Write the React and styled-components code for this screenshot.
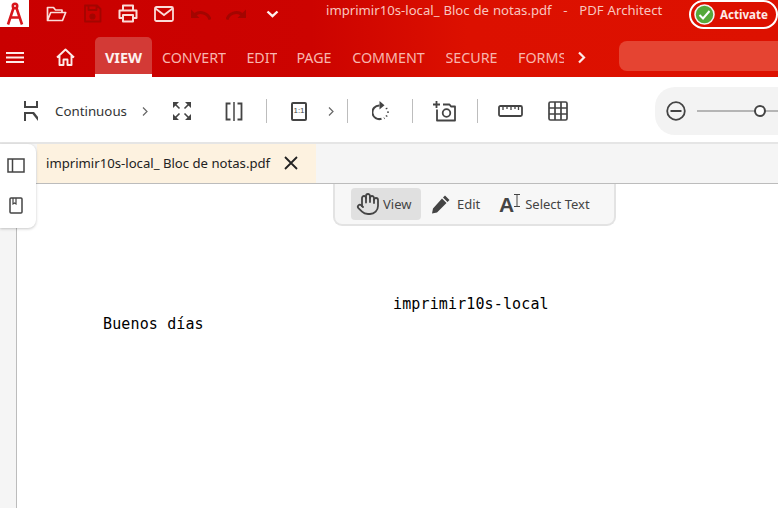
import React from "react";
import styled, { createGlobalStyle } from "styled-components";
import { Hand } from "lucide-react";

const Global = createGlobalStyle`
  html, body { margin: 0; padding: 0; background: #fff; }
  * { box-sizing: border-box; }
`;
const UI = `"Noto Sans", "Open Sans", sans-serif`;

const Page = styled.div`
  position: relative; width: 778px; height: 508px; overflow: hidden;
  display: flex; flex-direction: column; font-family: ${UI}; background: #fff;
`;
const Header = styled.header`
  height: 77px; flex: none; display: flex; flex-direction: column;
  background: linear-gradient(90deg, #c90000 0%, #cc0300 40%, #dc1000 60%, #dd1100 100%);
`;
const TitleBar = styled.div`height: 37px; flex: none; display: flex; align-items: flex-start;`;
const Logo = styled.div`width: 29px; height: 27px; background: #fff; flex: none; display: flex; justify-content: center; align-items: center;`;
const QuickIcon = styled.div`
  width: 36px; height: 27px; flex: none; display: flex; align-items: center; justify-content: center;
  color: ${p => p.$off ? "#a30500" : p.$bright ? "#fdf0ee" : "#fbdcd8"};
`;
const QuickGroup = styled.div`display: flex; margin-left: 9px;`;
const Title = styled.div`
  margin-left: 36px; width: 363px; flex: none; font-size: 13.15px; line-height: 20px; color: #f9c5bf; white-space: pre; word-spacing: .5px;
`;
const Activate = styled.div`
  width: 89px; height: 29px; border: 2px solid #fff; border-radius: 15px; flex: none;
  display: flex; align-items: center; gap: 5px; padding-left: 3px; color: #fdeae8; font-size: 11.6px; font-weight: 700;
`;
const NavBar = styled.nav`height: 40px; flex: none; display: flex; align-items: stretch; color: #f8b6ae;`;
const Burger = styled.div`width: 56px; padding-left: 6px; flex: none; display: flex; align-items: center;`;
const HomeBox = styled.div`width: 39px; flex: none; display: flex; align-items: center; color: #fdeae8;`;
const NavItem = styled.div`
  flex: none; width: ${p => p.$w}px; margin-left: ${p => p.$ml || 0}px; display: flex; align-items: center; justify-content: ${p => p.$clip ? "flex-start" : "center"};
  font-size: 14.3px; white-space: nowrap; overflow: hidden; padding-top: 1px;
`;
const ActiveTab = styled.div`
  width: 57px; flex: none; display: flex; align-items: center; justify-content: center; color: #fdf0ee;
  font-size: 14.5px; font-weight: 700; background: #d33a36; border-radius: 5px 5px 0 0; border-bottom: 3px solid #fff; padding-top: 3px;
`;
const NavArrow = styled.div`margin-left: 13px; width: 10px; flex: none; display: flex; align-items: center; color: #fdeae8;`;
const Search = styled.div`margin: 4px 0 6px 32px; flex: 1; background: #e54432; border-radius: 8px 0 0 8px;`;

const Toolbar = styled.div`
  height: 65px; flex: none; display: flex; align-items: center; background: #fff; color: #444; padding-top: 3px;
`;
const Tool = styled.div`
  margin-left: ${p => p.$ml}px; flex: none; display: flex; align-items: center; color: ${p => p.$soft ? "#666" : "#444"}; height: 24px;
`;
const ToolLabel = styled.span`margin-left: ${p => p.$ml}px; width: 72px; font-size: 13.3px; color: #333; flex: none; white-space: nowrap;`;
const Sep = styled.div`margin-left: ${p => p.$ml}px; width: 1px; height: 24px; background: #bdbdbd; flex: none;`;
const RatioIcon = styled.div`
  width: 16px; height: 19px; border: 2px solid #444; border-radius: 2px; font-size: 8px; line-height: 1; color: #444;
  display: flex; align-items: center; justify-content: center; font-family: "Liberation Sans", sans-serif;
`;
const ZoomPill = styled.div`
  margin-left: 87px; flex: 1; height: 48px; background: #f3f3f3; border-radius: 20px 0 0 20px;
  display: flex; align-items: center; padding-left: 11px;
`;
const Track = styled.div`
  position: relative; margin-left: 11px; flex: 1; height: 2px; background: #b5b5b5;
`;
const Knob = styled.div`
  position: absolute; left: 57px; top: -5px; width: 12px; height: 12px; border-radius: 50%; background: #fff; border: 2px solid #444;
`;
const TabStrip = styled.div`
  height: 42px; flex: none; background: #f5f5f5; border-top: 2px solid #e5e5e5; border-bottom: 1px solid #bcbcbc;
  display: flex; padding-left: 37px;
`;
const DocTab = styled.div`
  width: 279px; background: #fdf2e0; display: flex; align-items: center; padding: 0 0 2px 9px; font-size: 13.15px; color: #222;
  flex: none; white-space: nowrap;
`;
const CloseBox = styled.div`margin-left: 13px; display: flex; color: #222;`;
const Workspace = styled.div`flex: 1; display: flex; min-height: 0;`;
const Gutter = styled.div`width: 17px; flex: none; background: #f5f5f5; border-right: 1px solid #bcbcbc;`;
const Sheet = styled.main`
  flex: 1; background: #fff; padding-top: 110px; font-family: "DejaVu Sans Mono", monospace; font-size: 15px;
  letter-spacing: .13px; line-height: 20px; color: #000;
`;
const TextLine = styled.div`padding-left: ${p => p.$x}px; white-space: pre;`;
const SidePanel = styled.aside`
  position: absolute; left: 0; top: 144px; width: 36px; height: 84px; background: #fff;
  border-radius: 0 8px 8px 0; box-shadow: 0 1px 3px rgba(0,0,0,.22);
  display: flex; flex-direction: column; align-items: flex-start; color: #444;
`;
const SideBtn = styled.div`height: ${p => p.$h}px; display: flex; align-items: center; justify-content: center; width: 32px; padding-top: ${p => p.$pt || 0}px;`;
const ModeBar = styled.div`
  position: absolute; left: 333px; top: 184px; width: 283px; height: 42px; background: #f7f7f7;
  border: 2px solid #e3e3e3; border-top: 0; border-radius: 0 0 9px 9px; display: flex; align-items: center; padding-left: 16px; color: #444;
`;
const Mode = styled.div`
  flex: none; height: 32px; display: flex; align-items: center; border-radius: 4px; font-size: 13px; color: #444;
  width: ${p => p.$w}px; padding-left: ${p => p.$pl}px; gap: ${p => p.$gap}px;
  background: ${p => p.$on ? "#e0e0e0" : "transparent"};
`;
const BigA = styled.span`font-family: "Liberation Sans", sans-serif; font-weight: 700; font-size: 21px; line-height: 1; color: #444;`;

const S = ({ w, h, children, sw = 2 }) => (
  <svg width={w} height={h} viewBox={`0 0 ${w} ${h}`} fill="none" stroke="currentColor" strokeWidth={sw}>{children}</svg>
);

const App = () => (
  <Page>
    <Global />
    <Header>
      <TitleBar>
        <Logo>
          <svg width="22" height="25" viewBox="0 0 22 25" fill="none" stroke="#d9161c" strokeWidth="2.6">
            <circle cx="11" cy="5" r="2.2" />
            <path d="M9.500 7 L4 23.500 M12.500 7 L18 23.500 M5.500 16.500 H16.500" />
          </svg>
        </Logo>
        <QuickGroup>
          <QuickIcon>
            <S w={21} h={17} sw={1.7}><path d="M1.5 15.5V2.5h6l2 2.5h6.5v2.5M1.5 15.5l3.2-8h15l-3.2 8z" strokeLinejoin="round" /></S>
          </QuickIcon>
          <QuickIcon $off>
            <S w={19} h={19} sw={1.8}><path d="M2 1.5h12l3.5 3.5v12.5H2zM5.5 1.5v4.5h8V1.5" strokeLinejoin="round" /><circle cx="9.5" cy="12.5" r="2.2" fill="currentColor" /></S>
          </QuickIcon>
          <QuickIcon>
            <S w={20} h={19} sw={2}><path d="M5 6V1.5h10V6M5 14H1.5V6.5h17V14H15M5 11h10v6.500H5z" strokeLinejoin="round" /></S>
          </QuickIcon>
          <QuickIcon>
            <S w={20} h={16} sw={1.8}><rect x="1" y="1" width="18" height="14" rx="1.5" /><path d="M1.5 2.5L10 9l8.5-6.500" /></S>
          </QuickIcon>
          <QuickIcon $off>
            <S w={21} h={12} sw={3}><path d="M20 11.500C18 5 10 2.500 5 6.500" /><path d="M1 1.500v8.500h8.500z" fill="currentColor" stroke="none" /></S>
          </QuickIcon>
          <QuickIcon $off>
            <S w={21} h={12} sw={3}><path d="M1 11.500C3 5 11 2.500 16 6.500" /><path d="M20 1.500v8.500h-8.500z" fill="currentColor" stroke="none" /></S>
          </QuickIcon>
          <QuickIcon $bright>
            <S w={13} h={8} sw={2.4}><path d="M1.500 1.500L6.500 6.200l5-4.700" /></S>
          </QuickIcon>
        </QuickGroup>
        <Title>{"imprimir10s-local_ Bloc de notas.pdf   -   PDF Architect"}</Title>
        <Activate>
          <svg width="21" height="21" viewBox="0 0 21 21">
            <circle cx="10.500" cy="10.500" r="9.500" fill="#55a93a" stroke="#f4f4f4" strokeWidth="1.600" />
            <path d="M5.500 11l3.500 3.500 6.500-7.500" fill="none" stroke="#fff" strokeWidth="2" />
          </svg>
          Activate
        </Activate>
      </TitleBar>
      <NavBar>
        <Burger>
          <S w={18} h={13} sw={2}><path d="M0 2h18M0 6.500h18M0 11h18" stroke="#fdeae8" /></S>
        </Burger>
        <HomeBox>
          <S w={19} h={18} sw={1.900}><path d="M1 9.500L9.500 1.500 18 9.500M3.500 8v9h4v-5.500h4V17h4V8" strokeLinejoin="round" /></S>
        </HomeBox>
        <ActiveTab>VIEW</ActiveTab>
        <NavItem $ml={10} $w={64}>CONVERT</NavItem>
        <NavItem $ml={21} $w={30}>EDIT</NavItem>
        <NavItem $ml={20} $w={34}>PAGE</NavItem>
        <NavItem $ml={21} $w={73}>COMMENT</NavItem>
        <NavItem $ml={21} $w={51}>SECURE</NavItem>
        <NavItem $ml={21} $w={46} $clip>FORMS</NavItem>
        <NavArrow>
          <S w={9} h={13} sw={2.200}><path d="M2 1.500L7 6.500l-5 5" /></S>
        </NavArrow>
        <Search />
      </NavBar>
    </Header>

    <Toolbar>
      <Tool $ml={24}>
        <svg width="14" height="20" viewBox="0 0 14 20" fill="none" stroke="currentColor" strokeWidth="2">
          <path d="M1 0v6h12V0M1 20v-8h8" />
          <path d="M7 11h3l4 5v4z" fill="currentColor" stroke="none" />
        </svg>
      </Tool>
      <ToolLabel $ml={17}>Continuous</ToolLabel>
      <Tool $ml={15} $soft>
        <S w={6} h={9} sw={1.200}><path d="M1 .5l4 4-4 4" /></S>
      </Tool>
      <Tool $ml={25}>
        <svg width="18" height="18" viewBox="0 0 18 18" fill="currentColor" stroke="currentColor" strokeWidth="1.600">
          <path d="M0 6V0h6zM18 6V0h-6zM0 12v6h6zM18 12v6h-6z" stroke="none" />
          <path d="M2 2l4.500 4.500M16 2l-4.500 4.500M2 16l4.500-4.500M16 16l-4.500-4.500" />
        </svg>
      </Tool>
      <Tool $ml={34}>
        <S w={18} h={19} sw={1.800}><path d="M5.500 1.500H1.500v16h4M12.500 1.500h4v16h-4" /><path d="M9 0v19" strokeWidth="1.500" /></S>
      </Tool>
      <Sep $ml={23} />
      <Tool $ml={24}>
        <RatioIcon>1:1</RatioIcon>
      </Tool>
      <Tool $ml={21} $soft>
        <S w={6} h={9} sw={1.200}><path d="M1 .5l4 4-4 4" /></S>
      </Tool>
      <Sep $ml={13} />
      <Tool $ml={24}>
        <S w={17} h={20} sw={2}>
          <path d="M7.500 4.500a6.800 6.800 0 1 0 2 13.200" />
          <path d="M7.500 0l5 4.200-5 4.200z" fill="currentColor" stroke="none" />
          <path d="M14.200 7l.7 1M16 10.500v1.200M15 14.500l-.8 1M12.500 17l-.5.300" />
        </S>
      </Tool>
      <Sep $ml={23} />
      <Tool $ml={20}>
        <S w={24} h={22} sw={1.800}>
          <path d="M0 4.500h7M3.500 1v7" />
          <path d="M4 9.500v11h18V6.500h-4l-1.500-2H10" strokeLinejoin="round" />
          <circle cx="13.500" cy="13" r="3.800" />
        </S>
      </Tool>
      <Sep $ml={20} />
      <Tool $ml={20}>
        <S w={25} h={12} sw={1.800}>
          <rect x="1" y="1" width="23" height="10" rx="1.500" />
          <path d="M5 1v4M9 1v3M13 1v4M17 1v3M20.500 1v4" strokeWidth="1.300" />
        </S>
      </Tool>
      <Tool $ml={25}>
        <S w={20} h={20} sw={1.700}>
          <rect x="1" y="1" width="18" height="18" rx="1.500" />
          <path d="M7 1v18M13 1v18M1 7h18M1 13h18" />
        </S>
      </Tool>
      <ZoomPill>
        <S w={20} h={20} sw={1.800}>
          <circle cx="10" cy="10" r="8.800" />
          <path d="M4.500 10h11" strokeWidth="2" />
        </S>
        <Track><Knob /></Track>
      </ZoomPill>
    </Toolbar>

    <TabStrip>
      <DocTab>
        imprimir10s-local_ Bloc de notas.pdf
        <CloseBox>
          <S w={16} h={16} sw={1.800}><path d="M2 2l12 12M14 2L2 14" /></S>
        </CloseBox>
      </DocTab>
    </TabStrip>

    <Workspace>
      <Gutter />
      <Sheet>
        <TextLine $x={376}>imprimir10s-local</TextLine>
        <TextLine $x={86}>Buenos días</TextLine>
      </Sheet>
    </Workspace>

    <SidePanel>
      <SideBtn $h={42} $pt={1}>
        <S w={18} h={15} sw={1.500}><rect x="1" y="1" width="16" height="13" /><path d="M5.500 1v13" /></S>
      </SideBtn>
      <SideBtn $h={39}>
        <S w={14} h={17} sw={1.500}><rect x="1" y="1" width="12" height="15" rx="1" /><path d="M4 1v6l1.500-1L7 7V1" strokeWidth="1.200" /></S>
      </SideBtn>
    </SidePanel>

    <ModeBar>
      <Mode $on $w={70} $pl={5} $gap={3}>
        <Hand size={24} strokeWidth={1.800} style={{ flex: "none" }} />
        View
      </Mode>
      <Mode $w={70} $pl={10} $gap={6}>
        <svg width="20" height="20" viewBox="0 0 20 20" fill="currentColor" style={{ flex: "none" }}>
          <path d="M14 1.500l4.500 4.500-2 2L12 3.500zM11 4.500L15.500 9 6 18.500l-5 1 1-5z" />
        </svg>
        Edit
      </Mode>
      <Mode $w={110} $pl={8} $gap={4}>
        <BigA>A</BigA>
        <svg width="7" height="14" viewBox="0 0 7 14" fill="none" stroke="currentColor" strokeWidth="1" style={{ flex: "none", marginLeft: -4, marginTop: -6 }}>
          <path d="M0 .5h6M3 .5v12M0 12.500h6" />
        </svg>
        Select Text
      </Mode>
    </ModeBar>
  </Page>
);

export default App;
